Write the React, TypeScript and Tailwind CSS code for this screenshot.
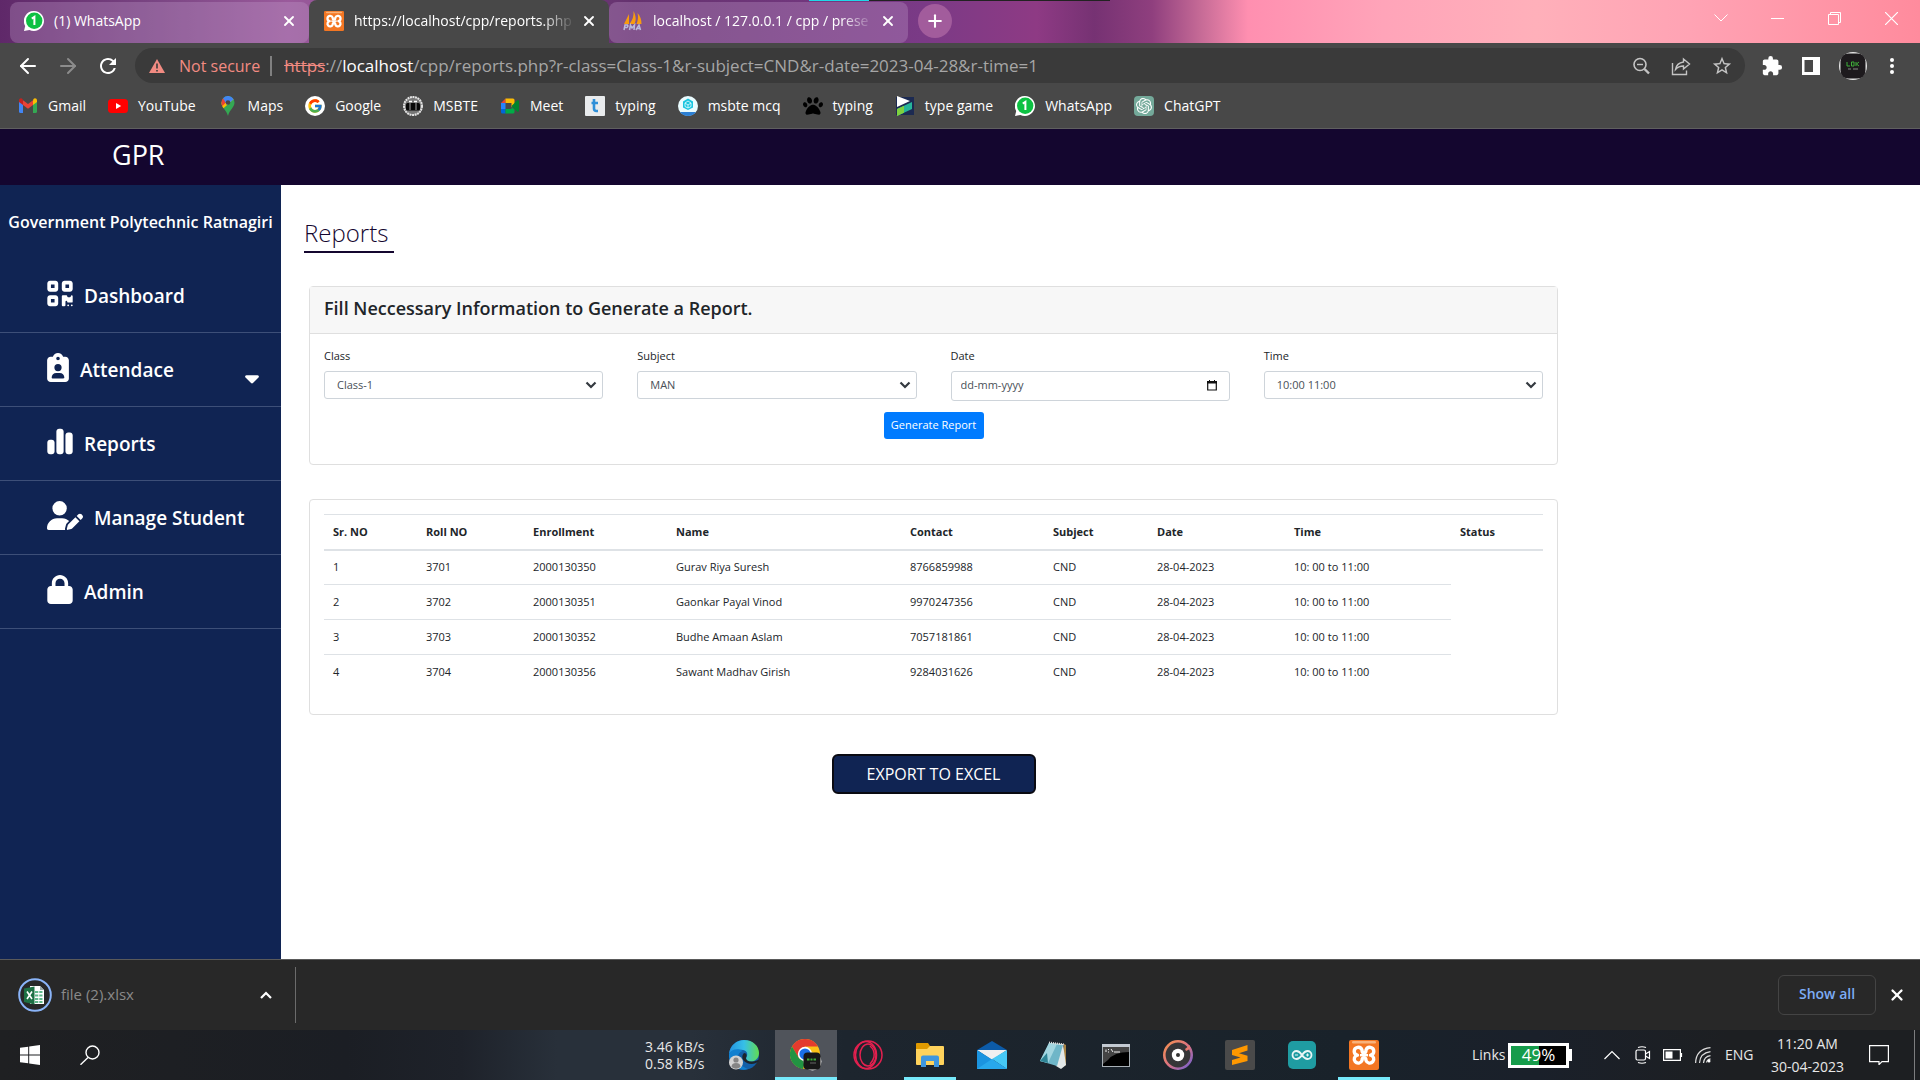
import type { ReactNode } from "react";
import { X, Plus, ArrowLeft, ArrowRight } from "lucide-react";
import {
  FaQrcode,
  FaClipboardUser,
  FaChartSimple,
  FaUserPen,
  FaLock,
  FaCaretDown,
  FaPaw,
} from "react-icons/fa6";
import { FcGoogle } from "react-icons/fc";
import { MdExtension, MdRefresh, MdStarBorder } from "react-icons/md";
import { SiOpenai } from "react-icons/si";

/* ---------- Small drawings ---------- */

function WhatsAppIcon() {
  return (
    <svg viewBox="0 0 20 20" className="size-5 shrink-0">
      <path d="M10 0a10 10 0 1 1-4.6 18.900L0 20l1.200-5A10 10 0 0 1 10 0z" fill="#fff" />
      <circle cx="10.200" cy="9.800" r="8.200" fill="#0dc143" />
      <path d="M7.800 7.600 10.400 5.800V14" fill="none" stroke="#fff" strokeWidth="2" />
    </svg>
  );
}

function XamppIcon({ className }: { className: string }) {
  return (
    <svg viewBox="0 0 30 30" className={className}>
      <rect width="30" height="30" rx="2" fill="#f37623" />
      <rect x="3" y="1" width="24" height="2.500" rx="1.200" fill="#f9b27a" />
      <path
        d="M8.500 15.200A4 4 0 1 1 13 10c0 2 .8 2.800 2 2.800s2-.8 2-2.800a4 4 0 1 1 4.500 5.200A4 4 0 1 1 17 20.500c0-2-.8-2.800-2-2.800s-2 .8-2 2.800a4 4 0 1 1-4.500-5.300z"
        fill="none"
        stroke="#fff"
        strokeWidth="3.400"
        strokeLinejoin="round"
      />
      <path d="M11 15.200h8" stroke="#fff" strokeWidth="2.400" />
    </svg>
  );
}

function PmaIcon() {
  return (
    <svg viewBox="0 0 20 20" className="size-5 shrink-0">
      <path d="M6 3v10H1zM10.500 0c2.500 5 3 9 1 13H6.500c3-4 4.500-8 4-13zM14.500 2c3 3 4 7 4 11h-5c1.500-4 2-7 1-11z" fill="#f89c0e" />
      <path d="M1 19l1-5h2.500q1 1.500-.500 2.500H2M6.500 19l1-5 1.500 3 2.500-3-.500 5M13 19l3-5 1.500 5M14 17.500h3" fill="none" stroke="#b9bbdc" strokeWidth="1.500" />
    </svg>
  );
}

function GmailIcon() {
  return (
    <svg viewBox="0 0 20 20" className="size-5 shrink-0">
      <path d="M1 5v10.500A1.500 1.500 0 0 0 2.500 17H5V8z" fill="#4285f4" />
      <path d="M15 17h2.500a1.500 1.500 0 0 0 1.500-1.500V5l-4 3z" fill="#34a853" />
      <path d="M15 4.500V9l4-3V4.500c0-2-2.200-2.800-3.500-1.500z" fill="#fbbc04" />
      <path d="M5 9V4.300l5 3.800 5-3.800V9l-5 3.800z" fill="#ea4335" />
      <path d="M1 4.500V6l4 3V4.500L4.500 3C3.200 1.700 1 2.500 1 4.500z" fill="#c5221f" />
    </svg>
  );
}

function YouTubeIcon() {
  return (
    <svg viewBox="0 0 20 20" className="size-5 shrink-0">
      <rect y="3" width="20" height="14" rx="3.500" fill="#f00" />
      <path d="M8 7v6l5.200-3z" fill="#fff" />
    </svg>
  );
}

function MapsIcon() {
  return (
    <svg viewBox="0 0 20 20" className="size-5 shrink-0">
      <path d="M10 0a6.500 6.500 0 0 1 6.500 6.500c0 5-5 7-6.500 13.500C8.500 14 3.500 11.500 3.500 6.500A6.500 6.500 0 0 1 10 0z" fill="#34a853" />
      <path d="M15.600 3.300 5.500 12.200C4.200 10.500 3.500 8.700 3.500 6.500L10 0z" fill="#fbbc04" />
      <path d="M3.500 6.500c0-1.600.600-3.200 1.600-4.300l4 3.300-4.800 4.600q-.800-1.600-.800-3.600z" fill="#ea4335" />
      <path d="M5.100 2.200A6.500 6.500 0 0 1 15.600 3.300L9 9z" fill="#4285f4" />
      <circle cx="10" cy="6.500" r="2.300" fill="#474747" />
    </svg>
  );
}

function GoogleIcon() {
  return (
    <span className="flex size-5 shrink-0 items-center justify-center rounded-full bg-white">
      <FcGoogle className="size-4" />
    </span>
  );
}

function MsbteIcon() {
  return (
    <svg viewBox="0 0 20 20" className="size-5 shrink-0">
      <circle cx="10" cy="10" r="9" fill="#777" stroke="#e4e4e4" strokeWidth="2" strokeDasharray="2 .6" />
      <rect x="3" y="7" width="14" height="7.500" rx="1.500" fill="#080808" />
      <path d="M7 7v7M13 7v7" stroke="#ccc" strokeWidth=".8" />
      <path d="M6 5.500h3M11 5.500h3" stroke="#fff" strokeWidth="1.500" />
    </svg>
  );
}

function MeetIcon() {
  return (
    <svg viewBox="0 0 20 20" className="size-5 shrink-0">
      <path d="M1 7 5.500 2.500V7z" fill="#ea4335" />
      <path d="M5.500 2.500H13A1.500 1.500 0 0 1 14.500 4v4.500L11.500 11V7h-6z" fill="#fbbc04" />
      <path d="M1 7h4.500v6H1z" fill="#2684fc" />
      <path d="M1 13h4.500v4.500h-3A1.500 1.500 0 0 1 1 16z" fill="#0066da" />
      <path d="M5.500 13h6v-2l3 2.500V16a1.500 1.500 0 0 1-1.500 1.500H5.500z" fill="#00ac47" />
      <path d="M11.500 10 17 4.500q2-1 2 .8v9.400q0 1.800-2 .8z" fill="#00832d" />
    </svg>
  );
}

function TypingIcon() {
  return (
    <svg viewBox="0 0 20 20" className="size-5 shrink-0">
      <rect width="20" height="20" rx="1" fill="#e9ebed" />
      <path d="M9 3v9.500q0 2.500 2.500 2.500H13M6.500 7H13" fill="none" stroke="#2f8fd8" strokeWidth="2.600" />
    </svg>
  );
}

function McqIcon() {
  return (
    <svg viewBox="0 0 20 20" className="size-5 shrink-0">
      <circle cx="10" cy="10" r="10" fill="#eafcff" />
      <path d="M10 2.500 15 5.500v6L10 14l-5-2.500v-6z" fill="#19c5e0" />
      <path d="M10 5l3 2v3.500l-3 1.500-3-1.500V7zM7 7l3 2 3-2M10 9v3" fill="none" stroke="#eafcff" strokeWidth=".8" />
      <path d="M2 16h16a10 10 0 0 1-16 0z" fill="#2b7fd4" />
    </svg>
  );
}

function TypeGameIcon() {
  return (
    <svg viewBox="0 0 20 20" className="size-5 shrink-0">
      <rect x="1" y="1" width="18" height="18" fill="#1c2a52" />
      <path d="M2 0 15 5 2 11z" fill="#fff" />
      <path d="M2 13 17 6v7L2 20z" fill="#27b59a" />
      <path d="M2 13 9 9.800V16.700L2 20z" fill="#7fd03e" />
    </svg>
  );
}

function GptIcon() {
  return (
    <span className="flex size-5 shrink-0 items-center justify-center rounded-sm bg-[#74a99a]">
      <SiOpenai className="size-4 text-white" />
    </span>
  );
}

/* ---------- Browser chrome ---------- */

type TabProps = { icon: ReactNode; title: string; active?: boolean; fade?: boolean };

function Tab({ icon, title, active = false, fade = false }: TabProps) {
  return (
    <div
      className={
        active
          ? "flex h-[43px] w-[300px] items-center rounded-t-lg bg-[#484848] pr-3 pb-0.5 pl-[15px]"
          : "mt-[2px] flex h-[41px] w-[299px] items-center rounded-lg bg-[#c8a2d0]/30 pr-3 pb-1 pl-3.5"
      }
    >
      {icon}
      <span
        className={
          fade
            ? "ml-2.5 min-w-0 flex-1 overflow-hidden whitespace-nowrap [mask-image:linear-gradient(to_right,black_85%,transparent)]"
            : "ml-2.5 min-w-0 flex-1 whitespace-nowrap"
        }
      >
        {title}
      </span>
      <button aria-label={"Close " + title} className="ml-1.5 flex size-4 items-center justify-center">
        <X className="size-4" strokeWidth={2.8} />
      </button>
    </div>
  );
}

function TabStrip() {
  return (
    <header className="relative flex h-[43px] shrink-0 items-start bg-[linear-gradient(90deg,#5f2869_0%,#7a4583_8%,#9a5a9b_15%,#65326f_33%,#7a3a86_48%,#8e3a84_54%,#763273_57%,#8f3f7e_60%,#c56a96_62.5%,#ff8fb0_65%,#ffa4b9_72%,#ffb0ba_80%,#ffa3b4_88%,#ff8b9d_100%)] pl-2.5 text-sm text-white">
      <span className="absolute top-0 left-[809px] flex h-px w-[301px] bg-[#222]">
        <span className="w-[60px] bg-[#20d8e8]" />
      </span>
      <Tab icon={<WhatsAppIcon />} title="(1) WhatsApp" />
      <Tab icon={<XamppIcon className="size-5 shrink-0" />} title="https://localhost/cpp/reports.php" active fade />
      <Tab icon={<PmaIcon />} title="localhost / 127.0.0.1 / cpp / prese" fade />
      <button aria-label="New tab" className="mt-1 ml-2.5 flex size-[34px] items-center justify-center rounded-full bg-[#a25c9c]">
        <Plus className="size-5" strokeWidth={2.5} />
      </button>
      <div className="ml-auto flex h-9 items-center">
        <button aria-label="Search tabs" className="flex w-[57px] justify-center">
          <svg viewBox="0 0 14 8" className="h-2 w-3.5" fill="none" stroke="currentColor">
            <path d="M.5.500 7 7 13.500.500" />
          </svg>
        </button>
        <button aria-label="Minimize" className="flex w-[57px] justify-center">
          <svg viewBox="0 0 13 13" className="size-[13px]" stroke="currentColor">
            <path d="M0 6.500h13" />
          </svg>
        </button>
        <button aria-label="Restore" className="flex w-[57px] justify-center">
          <svg viewBox="0 0 13 13" className="size-[13px]" fill="none" stroke="currentColor">
            <path d="M.5 2.500h10v10H.5zM2.500 2.500v-2h10v10h-2" />
          </svg>
        </button>
        <button aria-label="Close window" className="flex w-[57px] justify-center">
          <svg viewBox="0 0 13 13" className="size-[13px]" fill="none" stroke="currentColor" strokeWidth="1.200">
            <path d="M0 0l13 13M13 0 0 13" />
          </svg>
        </button>
      </div>
    </header>
  );
}

function Toolbar() {
  return (
    <div className="flex h-[45px] shrink-0 items-center bg-[#484848] pr-[22px] pl-4 text-white">
      <div className="flex gap-4 pr-[15px]">
        <button aria-label="Back">
          <ArrowLeft className="size-6" />
        </button>
        <button aria-label="Forward" className="text-[#8c8c8c]">
          <ArrowRight className="size-6" />
        </button>
        <button aria-label="Reload">
          <MdRefresh className="size-6" />
        </button>
      </div>
      <div className="flex h-[35px] flex-1 items-center rounded-full bg-[#3a3a3a] pr-3 pl-3.5">
        <svg viewBox="0 0 16 14" className="h-3.5 w-4">
          <path d="M8 0l8 14H0z" fill="#f28b82" />
          <path d="M8 4.500v5M8 11v1.500" stroke="#3a3a3a" strokeWidth="1.600" />
        </svg>
        <span className="ml-3.5 text-base text-[#f28b82]">Not secure</span>
        <span className="mr-3 ml-2.5 h-5 w-0.5 bg-[#808080]" />
        <div role="textbox" aria-label="Address" className="flex-1 text-[17px] text-[#a6a6a6]">
          <span className="text-[#f28b82] line-through">https</span>://<span className="text-white">localhost</span>
          /cpp/reports.php?r-class=Class-1&amp;r-subject=CND&amp;r-date=2023-04-28&amp;r-time=1
        </div>
        <div className="flex gap-5 text-[#c4c4c4]">
          <button aria-label="Zoom">
            <svg viewBox="0 0 20 20" className="size-5" fill="none" stroke="currentColor" strokeWidth="1.600">
              <circle cx="9" cy="8.500" r="6" />
              <path d="M13.500 13l4.500 4.500" strokeWidth="2.400" />
              <path d="M6 8.500h6" strokeWidth="1.400" />
            </svg>
          </button>
          <button aria-label="Share">
            <svg viewBox="0 0 20 20" className="size-5" fill="none" stroke="currentColor" strokeWidth="1.400">
              <path d="M1.500 7v11.500h14v-4" />
              <path d="M12.500 3l6 5-6 5v-3q-5 0-8 3.500 1-6.500 8-7.500z" />
            </svg>
          </button>
          <button aria-label="Bookmark this page">
            <MdStarBorder className="size-[22px]" />
          </button>
        </div>
      </div>
      <div className="ml-4 flex items-center gap-[19px]">
        <button aria-label="Extensions">
          <MdExtension className="size-[22px]" />
        </button>
        <button aria-label="Side panel">
          <svg viewBox="0 0 18 18" className="size-[18px]">
            <rect width="18" height="18" fill="#fff" />
            <rect x="2.500" y="3" width="8.500" height="12" fill="#484848" />
          </svg>
        </button>
        <button aria-label="Profile" className="flex size-7 items-center justify-center">
          <svg viewBox="0 0 28 28" className="size-7" fill="none">
            <circle cx="14" cy="14" r="14" fill="#e6e6e6" />
            <rect x="1.500" y="1.500" width="25" height="25" rx="8" fill="#1d1a1d" />
            <path d="M8 10v4h3M12.500 10h2.500v4h-2.500v-4M17 10v4M20 10l-2.500 2 2.500 2" stroke="#3fae3a" />
            <path d="M9 17h3M14 17h5" stroke="#888" />
          </svg>
        </button>
        <button aria-label="Menu">
          <svg viewBox="0 0 12 24" className="h-6 w-3" fill="currentColor">
            <circle cx="6" cy="6" r="2" />
            <circle cx="6" cy="12" r="2" />
            <circle cx="6" cy="18" r="2" />
          </svg>
        </button>
      </div>
    </div>
  );
}

const bookmarks: { label: string; icon: ReactNode }[] = [
  { label: "Gmail", icon: <GmailIcon /> },
  { label: "YouTube", icon: <YouTubeIcon /> },
  { label: "Maps", icon: <MapsIcon /> },
  { label: "Google", icon: <GoogleIcon /> },
  { label: "MSBTE", icon: <MsbteIcon /> },
  { label: "Meet", icon: <MeetIcon /> },
  { label: "typing", icon: <TypingIcon /> },
  { label: "msbte mcq", icon: <McqIcon /> },
  { label: "typing", icon: <FaPaw className="size-5 shrink-0 text-black" /> },
  { label: "type game", icon: <TypeGameIcon /> },
  { label: "WhatsApp", icon: <WhatsAppIcon /> },
  { label: "ChatGPT", icon: <GptIcon /> },
];

function BookmarksBar() {
  return (
    <nav
      aria-label="Bookmarks"
      className="flex h-[41px] shrink-0 items-center gap-[22px] border-b border-[#5f5f5f] bg-[#484848] pb-1 pl-[18px] text-sm text-white"
    >
      {bookmarks.map((b, i) => (
        <a key={i} href="#" className="flex items-center gap-2.5 whitespace-nowrap">
          {b.icon}
          {b.label}
        </a>
      ))}
    </nav>
  );
}

/* ---------- Page ---------- */

function NavItem({ icon, label, caret = false }: { icon: ReactNode; label: string; caret?: boolean }) {
  return (
    <li>
      <a href="#" className="flex h-[74px] items-center border-b border-[#3d4f78] pr-[18px] pl-[47px] text-[19px] font-semibold">
        <span className="mb-1">{icon}</span>
        <span className="mt-0.5 ml-[11px]">{label}</span>
        {caret && <FaCaretDown className="mt-4 ml-auto size-[22px]" />}
      </a>
    </li>
  );
}

function Sidebar() {
  return (
    <aside className="w-[281px] shrink-0 bg-[#102453] text-white">
      <h2 className="flex h-[74px] items-center justify-center text-base font-semibold whitespace-nowrap">
        Government Polytechnic Ratnagiri
      </h2>
      <ul>
        <NavItem icon={<FaQrcode className="h-[29px] w-[26px]" />} label="Dashboard" />
        <NavItem icon={<FaClipboardUser className="h-[29px] w-[22px]" />} label="Attendace" caret />
        <NavItem icon={<FaChartSimple className="h-[29px] w-[26px]" />} label="Reports" />
        <NavItem icon={<FaUserPen className="h-[29px] w-9" />} label="Manage Student" />
        <NavItem icon={<FaLock className="h-[29px] w-[26px]" />} label="Admin" />
      </ul>
    </aside>
  );
}

function SelectField({ id, label, value }: { id: string; label: string; value: string }) {
  return (
    <div>
      <label htmlFor={id} className="block leading-4">
        {label}
      </label>
      <div className="relative mt-[7px]">
        <select
          id={id}
          className="block h-7 w-full appearance-none rounded-[3px] border border-[#ced4da] bg-white px-3 text-[#495057]"
        >
          <option>{value}</option>
        </select>
        <svg
          viewBox="0 0 12 8"
          className="pointer-events-none absolute top-2.5 right-1.5 h-2 w-3"
          fill="none"
          stroke="#343a40"
          strokeWidth="2.200"
        >
          <path d="M1.500 1.500 6 6l4.500-4.500" />
        </svg>
      </div>
    </div>
  );
}

function DateField() {
  return (
    <div>
      <label htmlFor="r-date" className="block leading-4">
        Date
      </label>
      <div className="mt-[7px] flex h-[30px] items-center rounded-[3px] border border-[#ced4da] pr-3 pb-0.5 pl-[9px]">
        <input
          id="r-date"
          type="text"
          placeholder="dd-mm-yyyy"
          className="min-w-0 flex-1 outline-none placeholder:text-[#495057]"
        />
        <button type="button" aria-label="Open calendar">
          <svg viewBox="0 0 10 11" className="block h-[11px] w-2.5">
            <path d="M.7 2h8.600v8H.7z" fill="none" stroke="#111" strokeWidth="1.200" />
            <path d="M0 1h10v2.500H0zM2 0h1v1H2zM7 0h1v1H7z" fill="#111" />
          </svg>
        </button>
      </div>
    </div>
  );
}

function FilterCard() {
  return (
    <section className="h-[179px] rounded border border-[#dfdfdf]">
      <h2 className="flex h-[47px] items-center border-b border-[#dfdfdf] bg-[#f7f7f7] px-3.5 pb-1 text-lg font-semibold">
        Fill Neccessary Information to Generate a Report.
      </h2>
      <form className="px-3.5 pt-3.5 text-[11px]">
        <div className="grid grid-cols-4 gap-[34px]">
          <SelectField id="r-class" label="Class" value="Class-1" />
          <SelectField id="r-subject" label="Subject" value="MAN" />
          <DateField />
          <SelectField id="r-time" label="Time" value="10:00 11:00" />
        </div>
        <div className="mt-[11px] flex justify-center">
          <button type="button" className="h-[27px] w-[100px] rounded-[3px] bg-[#007bff] text-white">
            Generate Report
          </button>
        </div>
      </form>
    </section>
  );
}

const columns = [
  { label: "Sr. NO", width: "w-[93px]" },
  { label: "Roll NO", width: "w-[107px]" },
  { label: "Enrollment", width: "w-[143px]" },
  { label: "Name", width: "w-[234px]" },
  { label: "Contact", width: "w-[143px]" },
  { label: "Subject", width: "w-[104px]" },
  { label: "Date", width: "w-[137px]" },
  { label: "Time", width: "w-[166px]" },
  { label: "Status", width: "w-[92px]" },
];

const students = [
  ["1", "3701", "2000130350", "Gurav Riya Suresh", "8766859988"],
  ["2", "3702", "2000130351", "Gaonkar Payal Vinod", "9970247356"],
  ["3", "3703", "2000130352", "Budhe Amaan Aslam", "7057181861"],
  ["4", "3704", "2000130356", "Sawant Madhav Girish", "9284031626"],
];

function ReportCard() {
  return (
    <section className="mt-[34px] h-[216px] rounded border border-[#dfdfdf] px-3.5 pt-3.5">
      <table className="w-full table-fixed border-collapse text-left text-[11px]">
        <thead>
          <tr className="h-[35px] border-t border-b-2 border-[#dee2e6]">
            {columns.map((c) => (
              <th key={c.label} className={c.width + " px-[9px] font-bold"}>
                {c.label}
              </th>
            ))}
          </tr>
        </thead>
        <tbody>
          {students.map((row) => (
            <tr key={row[0]} className="group h-[35px]">
              {[...row, "CND", "28-04-2023", "10: 00 to 11:00"].map((cell, i) => (
                <td key={i} className="border-b border-[#dee2e6] px-[9px] group-last:border-b-0">
                  {cell}
                </td>
              ))}
            </tr>
          ))}
        </tbody>
      </table>
    </section>
  );
}

function Page() {
  return (
    <div className="flex min-h-0 flex-1 flex-col bg-white">
      <div className="flex h-14 shrink-0 items-center bg-[#14062f] pr-4 pb-1 pl-28 text-[27px] text-white">GPR</div>
      <div className="flex min-h-0 flex-1">
        <Sidebar />
        <main className="flex-1 pt-7 pl-[23px] text-[#212529]">
          <h1 className="flex h-10 w-[90px] items-center border-b-2 border-[#14062f] pt-0.5 text-2xl font-light text-[#14062f]">
            Reports
          </h1>
          <div className="mt-[33px] ml-[5px] w-full max-w-[1249px]">
            <FilterCard />
            <ReportCard />
            <div className="mt-[39px] flex justify-center">
              <button className="h-10 w-[204px] rounded-md border-2 border-[#0a0a12] bg-[#102453] text-base leading-8 text-white">
                EXPORT TO EXCEL
              </button>
            </div>
          </div>
        </main>
      </div>
    </div>
  );
}

function DownloadShelf() {
  return (
    <div className="flex h-[71px] shrink-0 items-center border-t border-[#5a5a5a] bg-[#282828] text-sm">
      <div className="flex h-14 w-[296px] items-center border-r border-[#6b6b6b] pr-[23px] pl-[18px]">
        <svg viewBox="0 0 34 34" className="size-[34px]">
          <circle cx="17" cy="17" r="15.800" fill="none" stroke="#8ab4f8" strokeWidth="2" />
          <path d="M12 8h10l4 4v14H12z" fill="#fff" />
          <path d="M22 8v4h4z" fill="#9aa" />
          <path d="M17 14h7.500M17 17.500h7.500M17 21h7.500M17 24h7.500" stroke="#5fb88a" strokeWidth="2" />
          <path d="M20.800 12v13" stroke="#fff" />
          <path d="M6 10.500 16.500 8.500v18L6 24z" fill="#1d7044" />
          <path d="M9 13.500l5 7.500M14 13.500 9 21" stroke="#fff" strokeWidth="1.600" />
        </svg>
        <span className="ml-[9px] text-[15px] text-[#8a8a8a]">file (2).xlsx</span>
        <button aria-label="Download options" className="ml-auto text-white">
          <svg viewBox="0 0 12 8" className="h-2 w-3" fill="none" stroke="currentColor" strokeWidth="2.200">
            <path d="M1 7l5-5 5 5" />
          </svg>
        </button>
      </div>
      <button className="mr-3 ml-auto h-10 w-[98px] rounded-md border border-[#444] pb-0.5 font-semibold text-[#7dacf5]">
        Show all
      </button>
      <button aria-label="Close downloads" className="mr-[14px] text-white">
        <X className="size-[18px]" strokeWidth={3} />
      </button>
    </div>
  );
}

/* ---------- Taskbar ---------- */

const edge = (
  <svg viewBox="0 0 30 30" className="size-[30px]">
    <defs>
      <linearGradient id="edge-top" x1="0" x2="1">
        <stop offset="0" stopColor="#2493df" />
        <stop offset=".5" stopColor="#36bfe8" />
        <stop offset="1" stopColor="#62dd50" />
      </linearGradient>
    </defs>
    <circle cx="15" cy="15" r="15" fill="#1360a8" />
    <path d="M0 14C1 5 8 0 15 0c9 0 15 6 15 13 0 6-5 9-10 9-3 0-4-2-3-4 2-3 2-7-3-8C8 9 2 11 0 14z" fill="url(#edge-top)" />
    <path d="M0 14c2-5 9-6 14-3-5 1-6 6-4 10 2 5 6 7 9 8C9 32-1 25 0 14z" fill="#1180d0" />
    <path d="M17 18c0 3 5 5 12 2l1 1c-3 3-8 4-12 2-5-2-6-7-3-10 3 0 3 3 2 5z" fill="#1d242c" />
    <circle cx="7" cy="22.500" r="7" fill="#d3d3d3" />
    <circle cx="7" cy="20" r="2.600" fill="#858585" />
    <path d="M2.500 27q0-4 4.500-4t4.500 4q-4.500 3.500-9 0z" fill="#858585" />
  </svg>
);

const chrome = (
  <svg viewBox="0 0 32 32" className="size-8">
    <circle cx="15" cy="15" r="15" fill="#fbc116" />
    <path d="M2 7.500A15 15 0 0 1 28 7.500H15L8.500 19z" fill="#e33b2e" />
    <path d="M2 7.500 8.500 18.500 15 22.500 13 30A15 15 0 0 1 2 7.500z" fill="#229342" />
    <circle cx="15" cy="15" r="7.200" fill="#fff" />
    <circle cx="15" cy="15" r="5.600" fill="#1a6fe8" />
    <circle cx="22.500" cy="22.500" r="9" fill="#e8e8e8" />
    <rect x="13.500" y="13.500" width="17" height="17" rx="4" fill="#171717" />
    <path d="M17 20.500h2.500M20.500 20.500h2M23.500 20.500h2.500" stroke="#3fae3a" strokeWidth="2" />
    <path d="M20 24h6" stroke="#666" />
  </svg>
);

const opera = (
  <svg viewBox="0 0 30 30" className="size-[30px]" fill="none" stroke="#e3204f" strokeWidth="1.500">
    <circle cx="15" cy="15" r="14" />
    <ellipse cx="13" cy="15" rx="10.500" ry="13.500" />
    <ellipse cx="15" cy="15" rx="8" ry="11" />
    <path d="M17 6q5 4 4 11-1 4-4 7" />
  </svg>
);

const folder = (
  <svg viewBox="0 0 28 24" className="h-6 w-7">
    <path d="M0 1q0-1 1-1h11l2 3v6H0z" fill="#e09a00" />
    <path d="M0 6h11l3-3h13q1 0 1 1v17q0 1-1 1H1q-1 0-1-1z" fill="#ffd35c" />
    <path d="M5 24V14.500q0-2 2-2h14q2 0 2 2V24h-5v-6h-8v6z" fill="#3f97df" />
  </svg>
);

const mail = (
  <svg viewBox="0 0 30 28" className="h-7 w-[30px]">
    <path d="M0 9 15 0l15 9z" fill="#0c5ba8" />
    <path d="M0 9h30L15 19z" fill="#f0f0f0" />
    <path d="M0 9v19h30z" fill="#1b94e0" />
    <path d="M30 9v19L15 18z" fill="#46c8f5" />
    <path d="M0 28h30L15 18z" fill="#28a8ec" />
  </svg>
);

const notepad = (
  <svg viewBox="0 0 30 28" className="h-7 w-[30px]">
    <path d="M25 3l2 1v20l-5 3z" fill="#a98343" />
    <path d="M10 2 24 3 27 24 22 28 17 25z" fill="#e2e8e8" />
    <path d="M10 2 24 4 18 25 1 20z" fill="#6fb6c8" />
    <path d="M10 2 18 3 9 22 1 20z" fill="#a3d6e0" />
    <path d="M1 20 8 12l1 10z" fill="#2f8596" />
    <path d="M10 1.500 25 3.500" stroke="#ddd" strokeWidth="2" strokeDasharray="1 1" />
  </svg>
);

const cmd = (
  <svg viewBox="0 0 28 23" className="h-[23px] w-7">
    <rect x=".5" y=".5" width="27" height="22" fill="#000" stroke="#a9b1b7" />
    <path d="M1 3h26v5q-15 0-21 8l-5 4z" fill="#444" />
    <path d="M0 0h28v3H0z" fill="#c3cad2" />
    <path d="M4 5.500v2.500M6 5.500h1M6 8h1M9 5l2 3M12 8h6" stroke="#eee" />
  </svg>
);

const music = (
  <svg viewBox="0 0 30 30" className="size-[30px]">
    <defs>
      <linearGradient id="music-ring" x1="0" x2="1" y2="1">
        <stop offset="0" stopColor="#f6924f" />
        <stop offset=".5" stopColor="#dc7380" />
        <stop offset="1" stopColor="#6c5fd6" />
      </linearGradient>
    </defs>
    <circle cx="15" cy="15" r="13.700" fill="#363638" stroke="url(#music-ring)" strokeWidth="2.600" />
    <path d="M22 9l5-4v4l-4 2z" fill="#e57a72" />
    <circle cx="15" cy="15" r="6.200" fill="#fff" />
    <circle cx="15" cy="15" r="2" fill="#333" />
  </svg>
);

const sublime = (
  <svg viewBox="0 0 30 30" className="size-[30px]">
    <rect width="30" height="30" rx="2" fill="#4a4a4a" />
    <path d="M7 10 22.500 5v5.500L14 13.200l8.500 2.600V21L7 25v-5l8.500-2.500L7 15z" fill="#ff9800" />
  </svg>
);

const arduino = (
  <svg viewBox="0 0 28 28" className="size-7">
    <rect width="28" height="28" rx="5" fill="#1f9ca2" />
    <path d="M14 14c-2-3-3.500-4-5.500-4a4 4 0 0 0 0 8c2 0 3.500-1 5.500-4s3.500-4 5.500-4a4 4 0 0 1 0 8c-2 0-3.500-1-5.500-4z" fill="none" stroke="#eaf6f6" strokeWidth="1.800" />
    <path d="M7 14h3M18 14h3M19.500 12.500v3" stroke="#eaf6f6" />
  </svg>
);

const apps: { name: string; icon: ReactNode; state?: "active" | "open" }[] = [
  { name: "Edge", icon: edge },
  { name: "Chrome", icon: chrome, state: "active" },
  { name: "Opera", icon: opera },
  { name: "File Explorer", icon: folder, state: "open" },
  { name: "Mail", icon: mail },
  { name: "Notepad", icon: notepad },
  { name: "Command Prompt", icon: cmd },
  { name: "Music", icon: music },
  { name: "Sublime Text", icon: sublime },
  { name: "Arduino", icon: arduino },
  { name: "XAMPP", icon: <XamppIcon className="size-[30px]" />, state: "open" },
];

function Taskbar() {
  return (
    <footer className="flex h-[50px] shrink-0 items-center bg-[linear-gradient(90deg,#1f2022_0%,#1b1e24_18%,#1e222a_24%,#28303a_29%,#28303a_36%,#1d252e_44%,#19222a_70%,#1a202a_80%,#1d1f22_90%,#1d1f22_100%)] text-sm text-[#e8e8e8]">
      <button aria-label="Start" className="flex w-[60px] justify-center">
        <svg viewBox="0 0 20 20" className="size-5" fill="#fff">
          <path d="M0 2.800 8.200 1.700v7.800H0zM9.200 1.500 20 0v9.500H9.200zM0 10.500h8.200v7.800L0 17.200zM9.200 10.500H20V20L9.200 18.500z" />
        </svg>
      </button>
      <button aria-label="Search" className="flex w-[60px] justify-center">
        <svg viewBox="0 0 20 20" className="size-5" fill="none" stroke="#fff" strokeWidth="1.400">
          <circle cx="12.500" cy="7.500" r="6.500" />
          <path d="M8 12.500.500 19.700" />
        </svg>
      </button>
      <div className="ml-auto w-[68px] shrink-0 text-sm leading-[17px] whitespace-nowrap">
        <div>3.46 kB/s</div>
        <div>0.58 kB/s</div>
      </div>
      <div className="flex h-full">
        {apps.map((app) => (
          <button
            key={app.name}
            aria-label={app.name}
            className={
              app.state === "active"
                ? "relative flex w-[62px] items-center justify-center bg-[#50545b]"
                : "relative flex w-[62px] items-center justify-center"
            }
          >
            {app.icon}
            {app.state === "active" && <span className="absolute inset-x-0 bottom-0 h-[3px] bg-[#76e9fb]" />}
            {app.state === "open" && <span className="absolute inset-x-[5px] bottom-0 h-[3px] bg-[#76e9fb]" />}
          </button>
        ))}
      </div>
      <div className="ml-[77px] flex h-full items-center">
        <span className="w-9">Links</span>
        <span className="flex items-center">
          <span className="flex h-[25px] w-[61px] items-center justify-center border-[3px] border-white bg-[linear-gradient(90deg,#169c4b_50%,#000_50%)] text-[17px] text-white">
            49%
          </span>
          <span className="h-3 w-[3px] bg-white" />
        </span>
        <button aria-label="Show hidden icons" className="ml-8">
          <svg viewBox="0 0 16 10" className="h-2.5 w-4" fill="none" stroke="#fff" strokeWidth="1.200">
            <path d="M.5 9 8 1.500 15.500 9" />
          </svg>
        </button>
        <svg viewBox="0 0 16 18" className="ml-[15px] h-[18px] w-4" fill="none" stroke="#fff" strokeWidth="1.200">
          <rect x="1" y="4" width="9.500" height="10" rx="1.500" />
          <path d="M10.500 8 14.500 5.500v7L10.500 10M3 1.500q4-1.500 8 0M3 16.500q4 1.500 8 0" />
        </svg>
        <svg viewBox="0 0 20 12" className="ml-3 h-3 w-5">
          <path d="M.6.600h16.800v10.800H.6zM18.500 4v4" fill="none" stroke="#fff" strokeWidth="1.200" />
          <path d="M2.500 2.500h7v7h-7z" fill="#fff" />
        </svg>
        <svg viewBox="0 0 16 16" className="ml-3 size-4" fill="none" stroke="#ddd" strokeWidth="1.200">
          <path d="M.6 16Q1 2 15.500.600M4.500 16Q5 6 15.500 4.600M8.500 16q.500-6.500 7-7.400M11.500 15.500q.500-3 4-3.700" />
          <circle cx="14" cy="14" r="1.500" fill="#fff" stroke="none" />
        </svg>
        <span className="ml-3.5 w-7">ENG</span>
        <div className="w-[109px] text-center text-sm leading-[23px]">
          <div>11:20 AM</div>
          <div>30-04-2023</div>
        </div>
        <button aria-label="Notifications" className="ml-[7px]">
          <svg viewBox="0 0 20 20" className="size-5" fill="none" stroke="#fff" strokeWidth="1.200">
            <path d="M.6.600h18.800v16H13l-3 3v-3H.6z" />
          </svg>
        </button>
        <span className="mr-[5px] ml-[25px] h-full w-px bg-[#7c7d7f]" />
      </div>
    </footer>
  );
}

export default function App() {
  return (
    <div className="flex h-screen flex-col overflow-hidden font-['Segoe_UI','Open_Sans','Noto_Sans',sans-serif]">
      <TabStrip />
      <Toolbar />
      <BookmarksBar />
      <Page />
      <DownloadShelf />
      <Taskbar />
    </div>
  );
}
